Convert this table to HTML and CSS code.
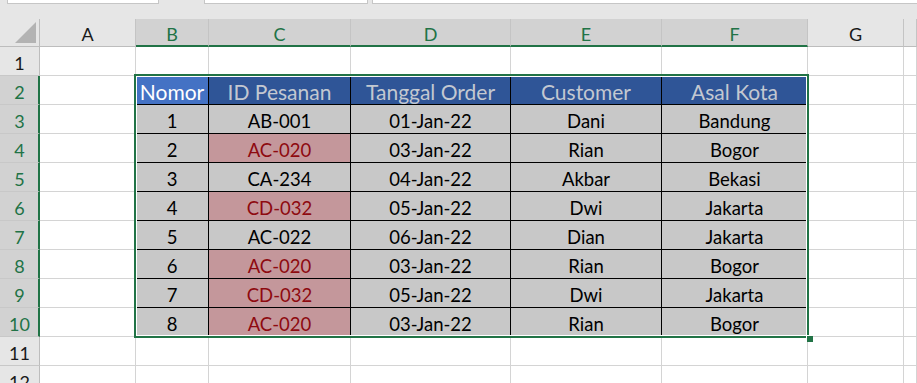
FILE: index.html
```html
<!DOCTYPE html>
<html lang="id">
<head>
<meta charset="utf-8">
<title>Data Pesanan</title>
<link rel="stylesheet" href="styles.css">
</head>
<body>
<div class="app">
  <div class="topbar">
    <div class="field name-box"></div>
    <div class="field fx-box"></div>
    <div class="field formula-box"></div>
  </div>

  <div class="sheet">
    <!-- column headers -->
    <div class="corner"><span class="corner-tri"></span></div>
    <div class="colhead">A</div>
    <div class="colhead sel">B</div>
    <div class="colhead sel">C</div>
    <div class="colhead sel">D</div>
    <div class="colhead sel">E</div>
    <div class="colhead sel">F</div>
    <div class="colhead">G</div>
    <div class="colhead"></div>

    <!-- row 1 -->
    <div class="rowhead">1</div>
    <div class="cell"></div><div class="cell"></div><div class="cell"></div><div class="cell"></div>
    <div class="cell"></div><div class="cell"></div><div class="cell"></div><div class="cell"></div>

    <!-- row 2: table header -->
    <div class="rowhead sel">2</div>
    <div class="cell"></div>
    <div class="cell th th-first">Nomor</div>
    <div class="cell th">ID Pesanan</div>
    <div class="cell th">Tanggal Order</div>
    <div class="cell th">Customer</div>
    <div class="cell th">Asal Kota</div>
    <div class="cell"></div><div class="cell"></div>

    <div class="rowhead sel">3</div>
    <div class="cell"></div>
    <div class="cell td">1</div>
    <div class="cell td">AB-001</div>
    <div class="cell td">01-Jan-22</div>
    <div class="cell td">Dani</div>
    <div class="cell td">Bandung</div>
    <div class="cell"></div><div class="cell"></div>

    <div class="rowhead sel">4</div>
    <div class="cell"></div>
    <div class="cell td">2</div>
    <div class="cell td dup">AC-020</div>
    <div class="cell td">03-Jan-22</div>
    <div class="cell td">Rian</div>
    <div class="cell td">Bogor</div>
    <div class="cell"></div><div class="cell"></div>

    <div class="rowhead sel">5</div>
    <div class="cell"></div>
    <div class="cell td">3</div>
    <div class="cell td">CA-234</div>
    <div class="cell td">04-Jan-22</div>
    <div class="cell td">Akbar</div>
    <div class="cell td">Bekasi</div>
    <div class="cell"></div><div class="cell"></div>

    <div class="rowhead sel">6</div>
    <div class="cell"></div>
    <div class="cell td">4</div>
    <div class="cell td dup">CD-032</div>
    <div class="cell td">05-Jan-22</div>
    <div class="cell td">Dwi</div>
    <div class="cell td">Jakarta</div>
    <div class="cell"></div><div class="cell"></div>

    <div class="rowhead sel">7</div>
    <div class="cell"></div>
    <div class="cell td">5</div>
    <div class="cell td">AC-022</div>
    <div class="cell td">06-Jan-22</div>
    <div class="cell td">Dian</div>
    <div class="cell td">Jakarta</div>
    <div class="cell"></div><div class="cell"></div>

    <div class="rowhead sel">8</div>
    <div class="cell"></div>
    <div class="cell td">6</div>
    <div class="cell td dup">AC-020</div>
    <div class="cell td">03-Jan-22</div>
    <div class="cell td">Rian</div>
    <div class="cell td">Bogor</div>
    <div class="cell"></div><div class="cell"></div>

    <div class="rowhead sel">9</div>
    <div class="cell"></div>
    <div class="cell td">7</div>
    <div class="cell td dup">CD-032</div>
    <div class="cell td">05-Jan-22</div>
    <div class="cell td">Dwi</div>
    <div class="cell td">Jakarta</div>
    <div class="cell"></div><div class="cell"></div>

    <div class="rowhead sel">10</div>
    <div class="cell"></div>
    <div class="cell td">8</div>
    <div class="cell td dup">AC-020</div>
    <div class="cell td">03-Jan-22</div>
    <div class="cell td">Rian</div>
    <div class="cell td">Bogor</div>
    <div class="cell"></div><div class="cell"></div>

    <div class="rowhead">11</div>
    <div class="cell"></div><div class="cell"></div><div class="cell"></div><div class="cell"></div>
    <div class="cell"></div><div class="cell"></div><div class="cell"></div><div class="cell"></div>

    <div class="rowhead">12</div>
    <div class="cell"></div><div class="cell"></div><div class="cell"></div><div class="cell"></div>
    <div class="cell"></div><div class="cell"></div><div class="cell"></div><div class="cell"></div>

    <!-- active selection B2:F10 -->
    <div class="selection"><span class="fill-handle"></span></div>
  </div>
</div>
</body>
</html>
```

FILE: styles.css
```css
* {
  box-sizing: border-box;
}

html, body {
  margin: 0;
  padding: 0;
  background: #ffffff;
  overflow: hidden;
}

.app {
  width: 917px;
  height: 383px;
  overflow: hidden;
  font-family: Lato, "Liberation Sans", sans-serif;
}

/* formula bar strip */
.topbar {
  height: 19px;
  background: #e6e6e6;
  display: flex;
  align-items: flex-start;
}

.field {
  height: 4px;
  background: #ffffff;
  border: 1px solid #c6c6c6;
  border-top: none;
}

.name-box {
  margin-left: 7px;
  width: 152px;
}

.fx-box {
  margin-left: 45px;
  width: 164px;
}

.formula-box {
  margin-left: 4px;
  flex: 1;
  border-right: none;
}

/* grid of the worksheet */
.sheet {
  position: relative;
  display: grid;
  grid-template-columns: 40px 96px 73px 142px 160px 151px 146px 96px 1fr;
  grid-template-rows: 28px;
  grid-auto-rows: 29px;
}

.corner {
  position: relative;
  background: #e6e6e6;
  border-right: 1px solid #bdbdbd;
  border-bottom: 1px solid #bdbdbd;
}

.corner-tri {
  position: absolute;
  right: 3px;
  bottom: 3px;
  width: 0;
  height: 0;
  border-left: 21px solid transparent;
  border-bottom: 21px solid #b3b3b3;
}

.colhead {
  background: #e6e6e6;
  border-right: 1px solid #c4c4c4;
  border-bottom: 1px solid #bdbdbd;
  color: #1a1a1a;
  font-size: 18px;
  display: flex;
  align-items: center;
  justify-content: center;
  padding-top: 2px;
}

.colhead.sel {
  background: #d2d2d2;
  color: #217346;
  border-bottom: 2px solid #217346;
  padding-top: 3px;
}

.rowhead {
  background: #e6e6e6;
  border-right: 1px solid #bdbdbd;
  border-bottom: 1px solid #c8c8c8;
  color: #1a1a1a;
  font-size: 18px;
  display: flex;
  align-items: center;
  justify-content: center;
  padding-top: 3px;
}

.rowhead.sel {
  background: #d2d2d2;
  color: #217346;
  border-right: 2px solid #217346;
  padding-left: 1px;
}

.cell {
  border-right: 1px solid #d4d4d4;
  border-bottom: 1px solid #d4d4d4;
  display: flex;
  align-items: center;
  justify-content: center;
  white-space: nowrap;
  padding-top: 3px;
}

/* formatted table B2:F10 */
.th {
  background: #2f5597;
  color: #c3c8d1;
  font-size: 21px;
  border-right-color: #000000;
  border-bottom-color: #000000;
}

.th-first {
  background: #4472c4;
  color: #ffffff;
}

.td {
  background: #c8c8c8;
  color: #000000;
  font-size: 18.5px;
  border-right-color: #000000;
  border-bottom-color: #000000;
}

.td.dup {
  background: #c4979b;
  color: #8e0a10;
}

/* active range outline */
.selection {
  position: absolute;
  left: 134px;
  top: 55px;
  width: 675px;
  height: 264px;
  border: 2px solid #217346;
  box-shadow: inset 0 0 0 1px #ffffff;
  pointer-events: none;
}

.fill-handle {
  position: absolute;
  right: -6px;
  bottom: -6px;
  width: 7px;
  height: 7px;
  background: #217346;
  border-left: 1px solid #ffffff;
  border-top: 1px solid #ffffff;
}
```
